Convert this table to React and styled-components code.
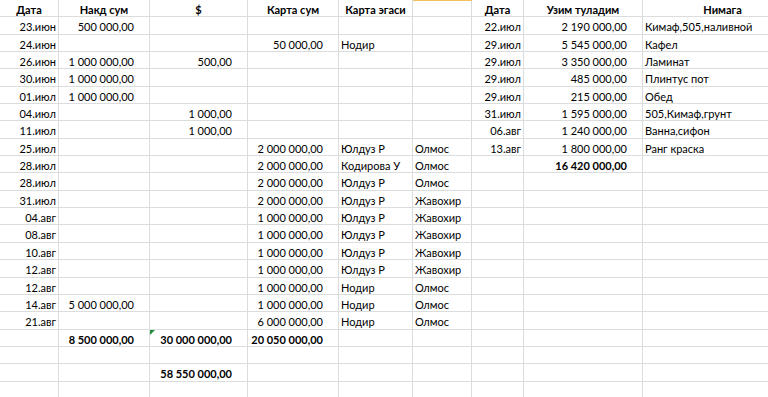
import styled, { createGlobalStyle } from "styled-components";

const GlobalStyle = createGlobalStyle`
  html, body {
    margin: 0;
    padding: 0;
    background: #ffffff;
    overflow: hidden;
  }
`;

// column widths, border sits on the last pixel of each
const COLS = [59, 91, 98, 91, 74, 59, 52, 119, 160];
// kind of each column: date, num, text
const KIND = ["date", "num", "num", "num", "text", "text", "date", "num", "text"];

const HEAD = ["Дата", "Накд сум", "$", "Карта сум", "Карта эгаси", "", "Дата", "Узим туладим", "Нимага"];

const LEFT = [
  ["23.июн", "500 000,00", "", "", "", ""],
  ["24.июн", "", "", "50 000,00", "Нодир", ""],
  ["26.июн", "1 000 000,00", "500,00", "", "", ""],
  ["30.июн", "1 000 000,00", "", "", "", ""],
  ["01.июл", "1 000 000,00", "", "", "", ""],
  ["04.июл", "", "1 000,00", "", "", ""],
  ["11.июл", "", "1 000,00", "", "", ""],
  ["25.июл", "", "", "2 000 000,00", "Юлдуз Р", "Олмос"],
  ["28.июл", "", "", "2 000 000,00", "Кодирова У", "Олмос"],
  ["28.июл", "", "", "2 000 000,00", "Юлдуз Р", "Олмос"],
  ["31.июл", "", "", "2 000 000,00", "Юлдуз Р", "Жавохир"],
  ["04.авг", "", "", "1 000 000,00", "Юлдуз Р", "Жавохир"],
  ["08.авг", "", "", "1 000 000,00", "Юлдуз Р", "Жавохир"],
  ["10.авг", "", "", "1 000 000,00", "Юлдуз Р", "Жавохир"],
  ["12.авг", "", "", "1 000 000,00", "Юлдуз Р", "Жавохир"],
  ["12.авг", "", "", "1 000 000,00", "Нодир", "Олмос"],
  ["14.авг", "5 000 000,00", "", "1 000 000,00", "Нодир", "Олмос"],
  ["21.авг", "", "", "6 000 000,00", "Нодир", "Олмос"],
  ["", "8 500 000,00", "30 000 000,00", "20 050 000,00", "", "", "total"],
  ["", "", "", "", "", ""],
  ["", "", "58 550 000,00", "", "", "", "total"],
  ["", "", "", "", "", ""],
];

const RIGHT = [
  ["22.июл", "2 190 000,00", "Кимаф,505,наливной"],
  ["29.июл", "5 545 000,00", "Кафел"],
  ["29.июл", "3 350 000,00", "Ламинат"],
  ["29.июл", "485 000,00", "Плинтус пот"],
  ["29.июл", "215 000,00", "Обед"],
  ["31.июл", "1 595 000,00", "505,Кимаф,грунт"],
  ["06.авг", "1 240 000,00", "Ванна,сифон"],
  ["13.авг", "1 800 000,00", "Ранг краска"],
  ["", "16 420 000,00", "", "total"],
];

const Sheet = styled.div`
  display: grid;
  grid-template-columns: ${COLS.map((w) => w + "px").join(" ")};
  grid-auto-rows: 17.35px;
  width: max-content;
  font-family: "Lato", "Open Sans", sans-serif;
  font-size: 11px;
  color: #000000;
`;

const Cell = styled.div`
  position: relative;
  box-sizing: border-box;
  border-right: 1px solid #dadcdd;
  border-bottom: 1px solid #dadcdd;
  line-height: 17px;
  padding-top: 1px;
  white-space: nowrap;
  overflow: visible;
  font-weight: ${({ $bold }) => ($bold ? 700 : 400)};
  text-align: ${({ $kind }) =>
    $kind === "head" ? "center" :
    $kind === "text" ? "left" :
    "right"};
  padding-left: ${({ $kind }) => ($kind === "text" ? "2px" : "0")};
  padding-right: ${({ $kind }) =>
    $kind === "num" ? "15px" :
    $kind === "date" ? "2px" :
    "0"};
`;

const SelectedEdge = styled.span`
  position: absolute;
  left: 0;
  right: -1px;
  top: 0;
  height: 1px;
  background: #f0c05a;
`;

const ErrorMark = styled.span`
  position: absolute;
  left: 0;
  top: 0;
  width: 0;
  height: 0;
  border-top: 5px solid #1f8c3b;
  border-right: 5px solid transparent;
`;

function buildRows() {
  const rows = [];
  for (let i = 0; i < LEFT.length; i++) {
    const l = LEFT[i];
    const r = RIGHT[i] || ["", "", ""];
    rows.push({
      cells: [l[0], l[1], l[2], l[3], l[4], l[5], r[0], r[1], r[2]],
      leftTotal: l[6] === "total",
      rightTotal: r[3] === "total",
    });
  }
  return rows;
}

export default function App() {
  const rows = buildRows();

  return (
    <>
      <GlobalStyle />
      <Sheet>
        {HEAD.map((h, c) => (
          <Cell key={"h" + c} $kind="head" $bold>
            {c === 5 && <SelectedEdge />}
            {h}
          </Cell>
        ))}
        {rows.map((row, r) =>
          row.cells.map((v, c) => (
            <Cell
              key={r + "-" + c}
              $kind={KIND[c]}
              $bold={(c < 6 && row.leftTotal) || (c >= 6 && row.rightTotal)}
            >
              {r === 18 && c === 2 && <ErrorMark />}
              {v}
            </Cell>
          ))
        )}
      </Sheet>
    </>
  );
}
